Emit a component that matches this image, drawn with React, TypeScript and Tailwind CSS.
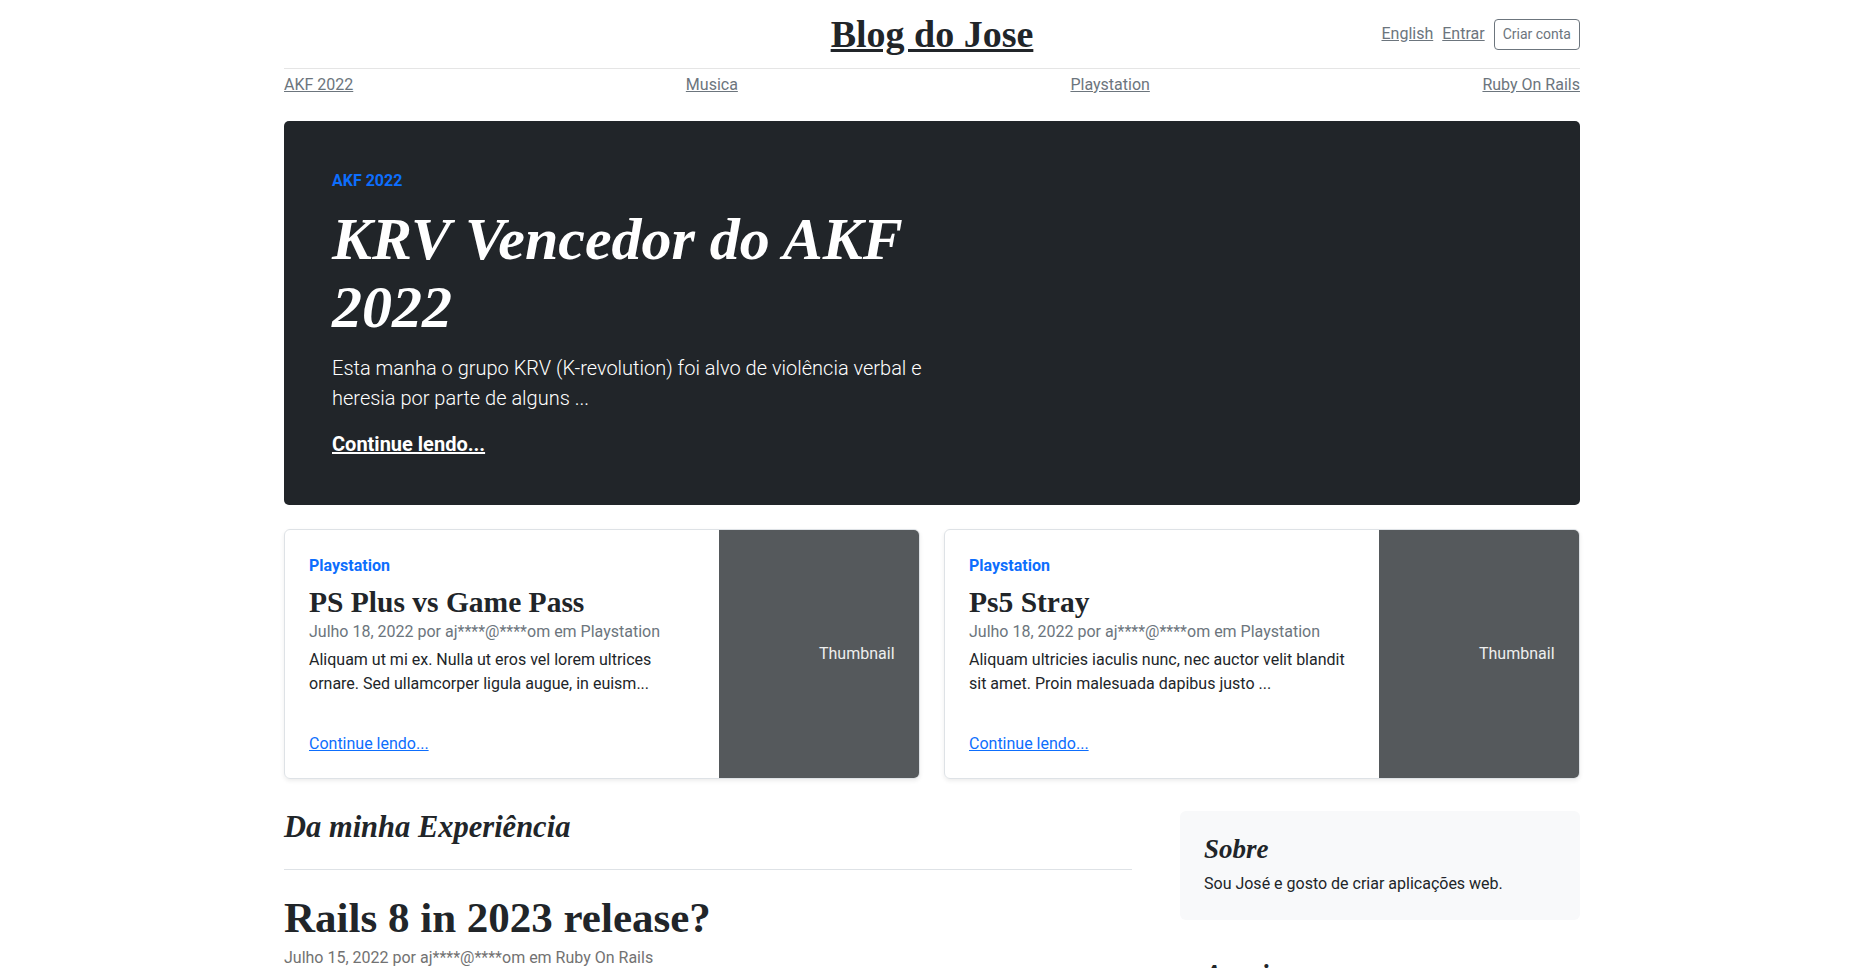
import React from "react"

const serif = "font-['Liberation_Serif','Times_New_Roman',serif]"

const cards = [
	{
		title: "PS Plus vs Game Pass",
		meta: "Julho 18, 2022 por aj****@****om em Playstation",
		text: "Aliquam ut mi ex. Nulla ut eros vel lorem ultrices ornare. Sed ullamcorper ligula augue, in euism...",
	},
	{
		title: "Ps5 Stray",
		meta: "Julho 18, 2022 por aj****@****om em Playstation",
		text: "Aliquam ultricies iaculis nunc, nec auctor velit blandit sit amet. Proin malesuada dapibus justo ...",
	},
]

function FeatureCard({ title, meta, text }: { title: string; meta: string; text: string }) {
	return (
		<div className="flex h-[250px] overflow-hidden rounded-[6px] border border-[#dee2e6] shadow-[0_2px_4px_rgba(0,0,0,0.075)]">
			<div className="flex flex-1 flex-col p-6">
				<strong className="mb-2 block font-bold text-[#0d6efd]">Playstation</strong>
				<h3 className={`${serif} mb-0 text-[29.5px] font-bold leading-[33.6px]`}>{title}</h3>
				<div className="mb-1 text-[#6c757d]">{meta}</div>
				<p className="mb-auto">{text}</p>
				<a href="#" className="-mb-[2px] text-[#0d6efd] underline">
					Continue lendo...
				</a>
			</div>
			<div className="flex w-[200px] items-center bg-[#55595c] pl-[100px] text-[#eeeeee]">
				Thumbnail
			</div>
		</div>
	)
}

export default function App() {
	return (
		<div className="min-h-screen bg-white pr-[5px] font-['Roboto',sans-serif] text-base leading-6 text-[#212529]">
			<div className="mx-auto w-[1296px]">
				{/* Header */}
				<header className="flex items-center justify-between border-b border-[#e5e5e5] py-4 leading-none">
					<div className="w-1/3"></div>
					<div className="flex h-9 w-1/3 items-center justify-center">
						<a href="#" className={`${serif} text-[38px] font-bold leading-9 text-[#212529] underline`}>
							Blog do Jose
						</a>
					</div>
					<div className="flex w-1/3 items-center justify-end gap-[9px]">
						<a href="#" className="text-[#6c757d] underline">
							English
						</a>
						<a href="#" className="text-[#6c757d] underline">
							Entrar
						</a>
						<a
							href="#"
							className="rounded-[4px] border border-[#6c757d] px-2 py-1 text-sm leading-[21px] text-[#6c757d]"
						>
							Criar conta
						</a>
					</div>
				</header>

				{/* Categories */}
				<nav className="mb-2 flex h-[44px] justify-between py-1">
					{["AKF 2022", "Musica", "Playstation", "Ruby On Rails"].map((c) => (
						<a key={c} href="#" className="text-[#6c757d] underline">
							{c}
						</a>
					))}
				</nav>

				{/* Hero */}
				<div className="mb-6 rounded-[5px] bg-[#212529] p-12 pb-[46px] text-white">
					<div className="w-[600px]">
						<strong className="mb-3 block font-bold text-[#0d6efd]">AKF 2022</strong>
						<h1 className={`${serif} mb-3 text-[60px] font-bold italic leading-[68px]`}>
							KRV Vencedor do AKF 2022
						</h1>
						<p className="mb-4 text-xl font-light leading-[30px]">
							Esta manha o grupo KRV (K-revolution) foi alvo de violência verbal e heresia por parte de alguns ...
						</p>
						<p className="text-xl leading-[30px]">
							<a href="#" className="font-bold text-white underline">
								Continue lendo...
							</a>
						</p>
					</div>
				</div>

				{/* Featured cards */}
				<div className="mb-8 grid grid-cols-2 gap-6">
					{cards.map((c) => (
						<FeatureCard key={c.title} {...c} />
					))}
				</div>

				{/* Main + sidebar */}
				<div className="grid grid-cols-[848px_400px] gap-12 pb-16">
					<div>
						<h3 className={`${serif} mb-6 border-b border-[#dee2e6] pb-6 text-[30.5px] font-bold italic leading-[33.6px]`}>
							Da minha Experiência
						</h3>
						<article className="mb-16">
							<h2 className={`${serif} mb-1 text-[43px] font-bold leading-[48px]`}>
								Rails 8 in 2023 release?
							</h2>
							<p className="mb-5 text-[#727272]">Julho 15, 2022 por aj****@****om em Ruby On Rails</p>
							<p className="mb-4">
								O DHH comentou que a próxima versão do Rails poderá sair ainda em 2023, trazendo novidades
								para o Hotwire, o Active Record e a forma como fazemos deploy das nossas aplicações.
							</p>
							<p className="mb-4">
								Vamos acompanhar as novidades e testar tudo aqui no blog assim que as primeiras versões
								estiverem disponíveis.
							</p>
						</article>
					</div>

					<aside>
						<div className="mb-4 rounded-[6px] bg-[#f8f9fa] p-6">
							<h4 className={`${serif} mb-2 text-[27px] font-bold italic leading-[28.8px]`}>Sobre</h4>
							<p>Sou José e gosto de criar aplicações web.</p>
						</div>
						<div className="p-6">
							<h4 className={`${serif} mb-2 text-[27px] font-bold italic leading-[28.8px]`}>Arquivos</h4>
							<ol className="flex flex-col">
								<li>
									<a href="#" className="text-[#0d6efd] underline">Julho 2022</a>
								</li>
								<li>
									<a href="#" className="text-[#0d6efd] underline">Junho 2022</a>
								</li>
							</ol>
						</div>
					</aside>
				</div>
			</div>
		</div>
	)
}
